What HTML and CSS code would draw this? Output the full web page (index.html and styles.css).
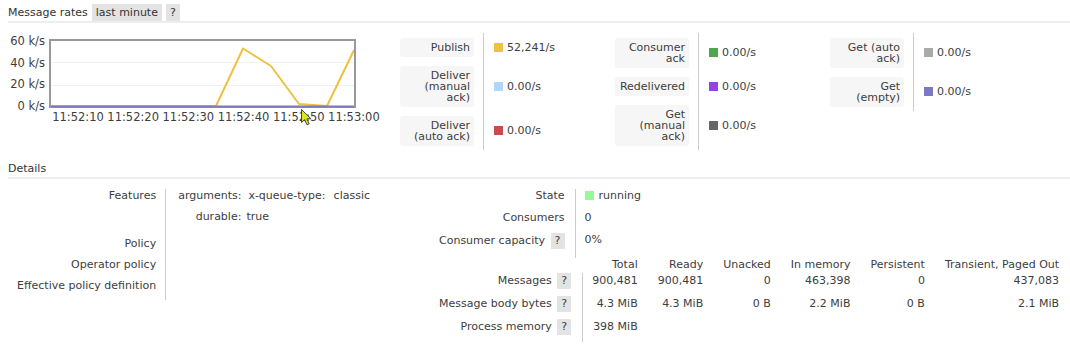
FILE: index.html
```html
<!DOCTYPE html>
<html lang="en">
  <head>
    <meta charset="UTF-8" />
    <meta name="viewport" content="width=device-width, initial-scale=1.0" />
    <title>Queue</title>
    <link rel="stylesheet" href="styles.css">
  </head>
  <body>
    <div class="section">
      <h2>Message rates <span class="pill">last minute</span><span class="pill">?</span></h2>
      <div class="rates">
        <div class="chart">
          <div class="y-axis">
            <span>60 k/s</span>
            <span>40 k/s</span>
            <span>20 k/s</span>
            <span>0 k/s</span>
          </div>
          <svg class="plot" width="307" height="69" viewBox="0 0 307 69">
            <line x1="2" y1="23.5" x2="305" y2="23.5" stroke="#f1f1f1" stroke-width="1" />
            <line x1="2" y1="46.5" x2="305" y2="46.5" stroke="#f1f1f1" stroke-width="1" />
            <polyline points="2,67 167,67 194,9.5 222,27 250,65 278,67 305,11" fill="none" stroke="#edc240" stroke-width="2" stroke-linejoin="round" />
            <rect x="1" y="1" width="305" height="67" fill="none" stroke="#999" stroke-width="2" />
            <line x1="2" y1="67.5" x2="305" y2="67.5" stroke="#7c79c3" stroke-width="2" />
          </svg>
          <div class="x-axis">
            <span>11:52:10</span>
            <span>11:52:20</span>
            <span>11:52:30</span>
            <span>11:52:40</span>
            <span>11:52:50</span>
            <span>11:53:00</span>
          </div>
          <svg class="cursor" width="12" height="17" viewBox="0 0 12 17">
            <path d="M0.5 0.5 L0.5 13.5 L3.6 10.6 L6 15.8 L8.2 14.8 L5.9 9.8 L10 9.8 Z" fill="#d8e81c" stroke="#333" stroke-width="0.9" />
          </svg>
        </div>

        <div class="legend">
          <table>
            <tr>
              <th><div class="box">Publish</div></th>
              <td><i class="swatch publish"></i>52,241/s</td>
            </tr>
            <tr>
              <th><div class="box">Deliver<br>(manual<br>ack)</div></th>
              <td><i class="swatch deliver"></i>0.00/s</td>
            </tr>
            <tr>
              <th><div class="box">Deliver<br>(auto ack)</div></th>
              <td><i class="swatch deliver-auto"></i>0.00/s</td>
            </tr>
          </table>
        </div>

        <div class="legend">
          <table>
            <tr>
              <th><div class="box">Consumer<br>ack</div></th>
              <td><i class="swatch ack"></i>0.00/s</td>
            </tr>
            <tr>
              <th><div class="box">Redelivered</div></th>
              <td><i class="swatch redeliver"></i>0.00/s</td>
            </tr>
            <tr>
              <th><div class="box">Get<br>(manual<br>ack)</div></th>
              <td><i class="swatch get"></i>0.00/s</td>
            </tr>
          </table>
        </div>

        <div class="legend">
          <table>
            <tr>
              <th><div class="box">Get (auto<br>ack)</div></th>
              <td><i class="swatch get-auto"></i>0.00/s</td>
            </tr>
            <tr>
              <th><div class="box">Get<br>(empty)</div></th>
              <td><i class="swatch get-empty"></i>0.00/s</td>
            </tr>
          </table>
        </div>
      </div>
    </div>

    <div class="section">
      <h2>Details</h2>
      <div class="details">
        <div class="details-left">
          <table class="facts">
            <tr>
              <th>Features</th>
              <td>
                <table class="mini">
                  <tr>
                    <th>arguments:</th>
                    <td>
                      <table class="mini inner">
                        <tr>
                          <th>x-queue-type:</th>
                          <td>classic</td>
                        </tr>
                      </table>
                    </td>
                  </tr>
                  <tr>
                    <th>durable:</th>
                    <td>true</td>
                  </tr>
                </table>
              </td>
            </tr>
            <tr>
              <th>Policy</th>
              <td></td>
            </tr>
            <tr>
              <th>Operator policy</th>
              <td></td>
            </tr>
            <tr>
              <th>Effective policy definition</th>
              <td></td>
            </tr>
          </table>
        </div>

        <div class="details-right">
          <table class="facts state">
            <tr>
              <th>State</th>
              <td><i class="swatch running"></i>running</td>
            </tr>
            <tr>
              <th>Consumers</th>
              <td>0</td>
            </tr>
            <tr>
              <th>Consumer capacity <span class="help">?</span></th>
              <td>0%</td>
            </tr>
          </table>

          <table class="counts">
            <thead>
              <tr>
                <th></th>
                <th>Total</th>
                <th>Ready</th>
                <th>Unacked</th>
                <th>In memory</th>
                <th>Persistent</th>
                <th>Transient, Paged Out</th>
              </tr>
            </thead>
            <tbody>
              <tr>
                <th>Messages <span class="help">?</span></th>
                <td>900,481</td>
                <td>900,481</td>
                <td>0</td>
                <td>463,398</td>
                <td>0</td>
                <td>437,083</td>
              </tr>
              <tr>
                <th>Message body bytes <span class="help">?</span></th>
                <td>4.3 MiB</td>
                <td>4.3 MiB</td>
                <td>0 B</td>
                <td>2.2 MiB</td>
                <td>0 B</td>
                <td>2.1 MiB</td>
              </tr>
              <tr>
                <th>Process memory <span class="help">?</span></th>
                <td>398 MiB</td>
                <td></td>
                <td></td>
                <td></td>
                <td></td>
                <td></td>
              </tr>
            </tbody>
          </table>
        </div>
      </div>
    </div>
  </body>
</html>
```

FILE: styles.css
```css
body {
  margin: 0;
  padding: 4px 0 0 8px;
  font-family: "DejaVu Sans", Verdana, sans-serif;
  font-size: 11px;
  color: #3d3d3d;
}
.section {
  margin-bottom: 10px;
}
h2 {
  margin: 0;
  display: flex;
  align-items: center;
  gap: 4px;
  height: 17px;
  font-size: 11px;
  font-weight: normal;
  color: #333;
  border-bottom: 2px solid #eee;
}
.pill {
  padding: 2px 4px;
  line-height: 13px;
  background-color: #e3e3e3;
}
.help {
  display: inline-block;
  width: 14px;
  height: 16px;
  line-height: 16px;
  margin-left: 2px;
  text-align: center;
  vertical-align: middle;
  background-color: #e3e3e3;
}
.rates {
  display: flex;
  align-items: flex-start;
  margin-top: 10px;
}

/* chart */
.chart {
  position: relative;
  flex: none;
  width: 392px;
  margin-top: 6px;
  display: grid;
  grid-template-columns: 41px 307px;
  grid-template-rows: 69px auto;
}
.y-axis {
  grid-column: 1;
  grid-row: 1;
  display: flex;
  flex-direction: column;
  justify-content: space-between;
  margin: -4px 0 -5px;
  padding-right: 4px;
  text-align: right;
  font-size: 11.5px;
  line-height: 13px;
}
.plot {
  grid-column: 2;
  grid-row: 1;
  display: block;
}
.x-axis {
  grid-column: 2;
  grid-row: 2;
  display: flex;
  margin: 3px 0 0 1.4px;
  font-size: 11.5px;
  line-height: 13px;
  white-space: nowrap;
}
.x-axis span {
  flex: 0 0 55.2px;
  text-align: center;
}
.cursor {
  position: absolute;
  left: 293px;
  top: 70px;
}

/* rate legends */
.legend {
  flex: none;
  width: 215px;
}
.legend table {
  border-collapse: collapse;
}
.legend th {
  padding: 5px 9px 4px 0;
  font-weight: normal;
  vertical-align: middle;
}
.legend td {
  padding: 0 0 0 10px;
  border-left: 1px solid #ccc;
  vertical-align: middle;
  white-space: nowrap;
  line-height: 13px;
}
.box {
  width: 66px;
  padding: 4px;
  line-height: 11px;
  text-align: right;
  background-color: #f6f6f6;
  border-radius: 3px;
}
.swatch {
  display: inline-block;
  width: 9px;
  height: 9px;
  margin-right: 4px;
  vertical-align: -1px;
}
.publish { background-color: #edc240; }
.deliver { background-color: #afd8f8; }
.deliver-auto { background-color: #cb4b4b; }
.ack { background-color: #4da74d; }
.redeliver { background-color: #9440ed; }
.get { background-color: #666666; }
.get-auto { background-color: #aaaaaa; }
.get-empty { background-color: #7c79c3; }
.running {
  background-color: #98f898;
  margin-right: 5px;
}

/* details */
.details {
  display: flex;
  align-items: flex-start;
  margin-top: 10px;
}
.details-left {
  flex: none;
  width: 423px;
}
.facts,
.mini,
.counts {
  border-collapse: collapse;
}
.facts > tbody > tr > th {
  padding: 0 9px 8px 9px;
  text-align: right;
  font-weight: normal;
  vertical-align: top;
  line-height: 13px;
  white-space: nowrap;
}
.facts > tbody > tr > td {
  padding: 0 0 8px 12px;
  border-left: 1px solid #ccc;
  vertical-align: top;
  line-height: 13px;
  white-space: nowrap;
}
.mini > tbody > tr > th {
  padding: 0 0 8px 0;
  text-align: right;
  font-weight: normal;
  line-height: 13px;
  vertical-align: top;
}
.mini > tbody > tr > td {
  padding: 0 0 8px 5px;
  line-height: 13px;
  vertical-align: top;
}
.mini > tbody > tr:last-child > th,
.mini > tbody > tr:last-child > td {
  padding-bottom: 6px;
}
.mini.inner > tbody > tr > th {
  padding: 0 3px 0 2px;
}
.mini.inner > tbody > tr > td {
  padding: 0 0 0 5px;
}
.state > tbody > tr > th {
  padding: 0 10px 9px 8px;
}
.state > tbody > tr > td {
  padding: 0 0 9px 9px;
}
.counts th {
  font-weight: normal;
  text-align: right;
  white-space: nowrap;
}
.counts thead th {
  padding: 0 0 2px 20px;
  line-height: 13px;
}
.counts thead th:nth-child(2) {
  padding-left: 9px;
}
.counts tbody th {
  padding: 0 11px 7px 8px;
  line-height: 16px;
}
.counts tbody td {
  padding: 0 0 7px 20px;
  line-height: 16px;
  text-align: right;
  white-space: nowrap;
}
.counts tbody td:nth-child(2) {
  padding-left: 9px;
  border-left: 1px solid #ccc;
}
```
